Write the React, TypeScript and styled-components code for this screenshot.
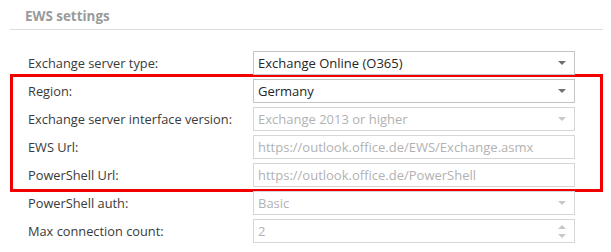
import React from "react";
import styled, { createGlobalStyle } from "styled-components";

const GlobalStyle = createGlobalStyle`
  body {
    margin: 0;
    background: #ffffff;
    font-family: "Open Sans", "Noto Sans", sans-serif;
  }
`;

const Page = styled.div`
  width: 611px;
  height: 252px;
  padding: 8px 0 0 13px;
  box-sizing: border-box;
`;

const Header = styled.div`
  margin-left: -3px;
  width: 593px;
  padding: 0 0 4px 15px;
  border-bottom: 1px solid #dcdcdc;
  box-sizing: border-box;
  color: #9a9a9a;
  font-weight: 700;
  font-size: 13.4px;
  line-height: 17px;
`;

const Form = styled.div`
  display: flex;
  flex-direction: column;
  gap: 4px;
  margin-top: 21px;
  width: 587px;
`;

const Highlight = styled.div`
  display: flex;
  flex-direction: column;
  gap: 4px;
  margin: -5px -3px;
  padding: 2px 0;
  border: 3px solid #f20000;
`;

const Row = styled.div`
  display: flex;
  align-items: center;
  height: 24px;
  padding-left: 15px;
`;

const Label = styled.span`
  width: 225px;
  color: #3a3a3a;
  font-size: 12.8px;
`;

const Field = styled.div<{ $disabled?: boolean }>`
  position: relative;
  display: flex;
  align-items: center;
  width: 322px;
  height: 24px;
  padding: 0 4px;
  box-sizing: border-box;
  border: 1px solid ${(p) => (p.$disabled ? "#d6d6d6" : "#c4c4c4")};
  background: #ffffff;
  color: ${(p) => (p.$disabled ? "#b2b2b2" : "#262626")};
  font-size: 13px;
`;

const Arrow = styled.span<{ $disabled?: boolean; $up?: boolean }>`
  width: 0;
  height: 0;
  border-left: 4px solid transparent;
  border-right: 4px solid transparent;
  ${(p) =>
    p.$up
      ? `border-bottom: 4px solid ${p.$disabled ? "#c8c8c8" : "#707070"};`
      : `border-top: 4px solid ${p.$disabled ? "#c8c8c8" : "#707070"};`}
`;

const ArrowSlot = styled.span`
  position: absolute;
  right: 8px;
  top: 0;
  bottom: 0;
  display: flex;
  flex-direction: column;
  justify-content: center;
  gap: 5px;
`;

type RowProps = {
  label: string;
  value: string;
  disabled?: boolean;
  kind?: "select" | "text" | "spin";
};

const FormRow: React.FC<RowProps> = ({ label, value, disabled, kind = "text" }) => (
  <Row>
    <Label>{label}</Label>
    <Field $disabled={disabled}>
      {value}
      {kind === "select" && (
        <ArrowSlot>
          <Arrow $disabled={disabled} />
        </ArrowSlot>
      )}
      {kind === "spin" && (
        <ArrowSlot>
          <Arrow $disabled={disabled} $up />
          <Arrow $disabled={disabled} />
        </ArrowSlot>
      )}
    </Field>
  </Row>
);

export default function App() {
  return (
    <>
      <GlobalStyle />
      <Page>
        <Header>EWS settings</Header>
        <Form>
          <FormRow label="Exchange server type:" value="Exchange Online (O365)" kind="select" />
          <Highlight>
            <FormRow label="Region:" value="Germany" kind="select" />
            <FormRow
              label="Exchange server interface version:"
              value="Exchange 2013 or higher"
              kind="select"
              disabled
            />
            <FormRow
              label="EWS Url:"
              value="https://outlook.office.de/EWS/Exchange.asmx"
              disabled
            />
            <FormRow
              label="PowerShell Url:"
              value="https://outlook.office.de/PowerShell"
              disabled
            />
          </Highlight>
          <FormRow label="PowerShell auth:" value="Basic" kind="select" disabled />
          <FormRow label="Max connection count:" value="2" kind="spin" disabled />
        </Form>
      </Page>
    </>
  );
}
